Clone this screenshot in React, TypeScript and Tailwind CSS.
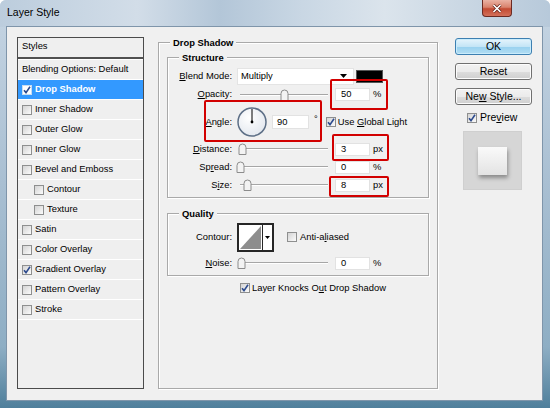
import React from "react";

const listItems = [
  { name: "Inner Shadow" },
  { name: "Outer Glow" },
  { name: "Inner Glow" },
  { name: "Bevel and Emboss" },
  { name: "Contour", sub: true },
  { name: "Texture", sub: true },
  { name: "Satin" },
  { name: "Color Overlay" },
  { name: "Gradient Overlay", checked: true },
  { name: "Pattern Overlay" },
  { name: "Stroke" },
];

function U({ children }: { children: React.ReactNode }) {
  return <span className="underline underline-offset-[1px]">{children}</span>;
}

function Check({ checked, white }: { checked?: boolean; white?: boolean }) {
  return (
    <span
      className={
        "flex h-[10px] w-[10px] shrink-0 items-center justify-center border " +
        (white
          ? "border-[#c8dcf0] bg-white"
          : "border-[#8e8f8f] bg-gradient-to-br from-[#d4d4d4] to-[#fbfbfb]")
      }
    >
      {checked && (
        <svg width="8" height="8" viewBox="0 0 8 8">
          <path d="M1 4.2 L3 6.6 L7 0.8" fill="none" stroke="#2d4b8e" strokeWidth="1.6" />
        </svg>
      )}
    </span>
  );
}

function Legend({ children }: { children: React.ReactNode }) {
  return (
    <div className="-mt-[6px] ml-[11px] w-fit bg-[#f0f0f0] px-[3px] font-bold leading-[11px]">
      {children}
    </div>
  );
}

function Slider({ pos }: { pos: number }) {
  return (
    <div className="relative ml-[4px] h-[14px] w-[92px]">
      <div className="absolute left-[4px] right-0 top-[6px] h-[2px] border-t border-b border-t-[#a6a6a6] border-b-white" />
      <svg className="absolute top-[1px]" style={{ left: pos }} width="9" height="12" viewBox="0 0 9 12">
        <path d="M1 11.5 V4.5 A3.5 3.5 0 0 1 8 4.5 V11.5 Z" fill="#f3f3f3" stroke="#8c8c8c" />
      </svg>
    </div>
  );
}

function Field({ value }: { value: string }) {
  return (
    <div className="ml-[7px] flex h-[13px] w-[35px] items-center border border-[#e2e2e2] bg-white pl-[5px]">
      {value}
    </div>
  );
}

function Label({ children }: { children: React.ReactNode }) {
  return <div className="w-[64px] shrink-0 text-right">{children}</div>;
}

function SliderRow({ label, pos, value, unit }: { label: React.ReactNode; pos: number; value: string; unit: string }) {
  return (
    <div className="flex h-[18px] items-center">
      <Label>{label}</Label>
      <Slider pos={pos} />
      <Field value={value} />
      <span className="ml-[3px]">{unit}</span>
    </div>
  );
}

function Btn({ children, primary }: { children: React.ReactNode; primary?: boolean }) {
  return (
    <div
      className={
        "flex h-[17px] w-[77px] items-center justify-center rounded-[3px] border " +
        (primary
          ? "border-[#3c7fb1] bg-[linear-gradient(180deg,#e5f4fc_0%,#c4e5f6_50%,#98d1ef_51%,#b2ddf3_100%)] shadow-[inset_0_0_0_1px_#c9ecfc]"
          : "border-[#707070] bg-[linear-gradient(180deg,#f2f2f2_0%,#ebebeb_50%,#dddddd_51%,#cfcfcf_100%)] shadow-[inset_0_0_0_1px_#fcfcfc]")
      }
    >
      <span>{children}</span>
    </div>
  );
}

export default function App() {
  return (
    <div className="relative flex h-[408px] w-[550px] flex-col overflow-hidden rounded-t-[6px] bg-[linear-gradient(180deg,#c6d5e3_0%,#a9bfd2_45%,#8eaec4_85%,#4f7f9b_100%)] font-['Liberation_Sans',Arial,sans-serif] text-[9.4px] text-black">
      {/* title bar */}
      <div className="flex h-[27px] shrink-0 items-start bg-[linear-gradient(90deg,#bccddd_0%,#d2dde8_25%,#b3c6d8_40%,#c9d7e4_55%,#dbe4ec_70%,#b7c9da_100%)]">
        <span className="ml-[7px] mt-[6px] text-[10.5px] leading-[13px]">Layer Style</span>
        <div className="ml-auto mr-[38px] flex h-[17px] w-[30px] items-center justify-center rounded-b-[4px] border border-t-0 border-[#6b2a22] bg-[linear-gradient(180deg,#eab2a3_0%,#d9836d_45%,#c24a32_55%,#d3705a_100%)]">
          <svg width="10" height="9" viewBox="0 0 10 9">
            <path d="M1.5 1 L8.5 8 M8.5 1 L1.5 8" stroke="#5a1d15" strokeWidth="3" />
            <path d="M1.5 1 L8.5 8 M8.5 1 L1.5 8" stroke="#ffffff" strokeWidth="1.7" />
          </svg>
        </div>
      </div>

      {/* client area */}
      <div className="mb-[8px] ml-[7px] mr-[8px] flex flex-1 items-start bg-[#f0f0f0] shadow-[0_0_0_1px_#7f95aa]">
        {/* styles list */}
        <div className="ml-[10px] mt-[10px] h-[352px] w-[127px] shrink-0 border border-[#4b4b4b] bg-[#efefef]">
          <div className="flex h-[21px] items-center border-b-2 border-[#505050] pb-[2px] pl-[4px]">Styles</div>
          <div className="h-[1px] bg-white" />
          <div className="flex h-[20px] items-center border-b border-white pl-[4px]">Blending Options: Default</div>
          <div className="flex h-[20px] items-center border-b border-white bg-[#3399ff] pl-[4px] font-bold text-white">
            <Check checked white />
            <span className="ml-[3px]">Drop Shadow</span>
          </div>
          {listItems.map((it) => (
            <div
              key={it.name}
              className={"flex h-[20px] items-center border-b border-white " + (it.sub ? "pl-[16px]" : "pl-[4px]")}
            >
              <Check checked={it.checked} />
              <span className="ml-[3px]">{it.name}</span>
            </div>
          ))}
        </div>

        {/* drop shadow settings */}
        <div className="ml-[14px] mt-[15px] h-[347px] w-[280px] shrink-0 border border-[#a9a9a9] shadow-[inset_1px_1px_0_#fff,1px_1px_0_#fff]">
          <Legend>Drop Shadow</Legend>
          <div className="mx-[8px] mt-[9px] border border-[#a9a9a9] pb-[3px] shadow-[inset_1px_1px_0_#fff,1px_1px_0_#fff]">
            <Legend>Structure</Legend>
            <div className="mt-[4px] flex h-[18px] items-center">
              <Label>
                <U>B</U>lend Mode:
              </Label>
              <div className="ml-[5px] flex h-[17px] w-[117px] items-center justify-between border border-[#e4e4e4] bg-white pl-[3px] pr-[6px]">
                <span>Multiply</span>
                <svg width="7" height="4" viewBox="0 0 7 4">
                  <path d="M0 0 H7 L3.5 4 Z" fill="#000" />
                </svg>
              </div>
              <div className="ml-[2px] h-[13px] w-[27px] border border-[#555] bg-black" />
            </div>
            <div className="flex h-[19px] items-center">
              <Label>
                <U>O</U>pacity:
              </Label>
              <Slider pos={44} />
              <Field value="50" />
              <span className="ml-[3px]">%</span>
            </div>
            <div className="flex h-[36px] items-center">
              <Label>
                <U>A</U>ngle:
              </Label>
              <svg className="ml-[5px]" width="30" height="30" viewBox="0 0 30 30">
                <defs>
                  <radialGradient id="dial" cx="40%" cy="35%" r="70%">
                    <stop offset="0" stopColor="#ffffff" />
                    <stop offset="1" stopColor="#e2e7ee" />
                  </radialGradient>
                </defs>
                <circle cx="15" cy="15" r="14" fill="url(#dial)" stroke="#5d6f86" strokeWidth="1.5" />
                <line x1="15" y1="15" x2="15" y2="2" stroke="#000" strokeWidth="1" />
                <circle cx="15" cy="15" r="1.4" fill="#000" />
              </svg>
              <div className="ml-[5px] flex h-[14px] w-[37px] items-center border border-[#e2e2e2] bg-white pl-[4px]">90</div>
              <span className="-mt-[6px] ml-[5px]">°</span>
              <span className="ml-[8px]">
                <Check checked />
              </span>
              <span className="ml-[2px]">
                Use <U>G</U>lobal Light
              </span>
            </div>
            <SliderRow label={<><U>D</U>istance:</>} pos={2} value="3" unit="px" />
            <SliderRow label={<>Sp<U>r</U>ead:</>} pos={0} value="0" unit="%" />
            <SliderRow label={<>S<U>i</U>ze:</>} pos={7} value="8" unit="px" />
          </div>

          <div className="mx-[8px] mt-[15px] border border-[#a9a9a9] pb-[3px] shadow-[inset_1px_1px_0_#fff,1px_1px_0_#fff]">
            <Legend>Quality</Legend>
            <div className="mt-[1px] flex h-[34px] items-center">
              <Label>Contour:</Label>
              <div className="ml-[5px] flex h-[29px] w-[37px] border-2 border-[#262626] bg-white">
                <svg width="23" height="25" viewBox="0 0 23 25">
                  <polygon points="1,24 22,1 22,24" fill="#8d8d8d" />
                </svg>
                <div className="flex flex-1 items-center justify-center border-l border-[#262626]">
                  <svg width="5" height="3" viewBox="0 0 5 3">
                    <path d="M0 0 H5 L2.5 3 Z" fill="#000" />
                  </svg>
                </div>
              </div>
              <span className="ml-[13px]">
                <Check />
              </span>
              <span className="ml-[3px]">
                Anti-a<U>l</U>iased
              </span>
            </div>
            <SliderRow label={<><U>N</U>oise:</>} pos={0.5} value="0" unit="%" />
          </div>

          <div className="ml-[81px] mt-[5px] flex h-[14px] items-center">
            <Check checked />
            <span className="ml-[2px]">
              Layer Knocks O<U>u</U>t Drop Shadow
            </span>
          </div>
        </div>

        {/* buttons */}
        <div className="ml-[17px] mt-[11px] flex w-[77px] shrink-0 flex-col text-[10.5px]">
          <Btn primary>OK</Btn>
          <div className="mt-[8px]">
            <Btn>Reset</Btn>
          </div>
          <div className="mt-[8px]">
            <Btn>
              Ne<U>w</U> Style...
            </Btn>
          </div>
          <div className="ml-[12px] mt-[8px] flex h-[10px] items-center">
            <Check checked />
            <span className="ml-[3px]">
              Pre<U>v</U>iew
            </span>
          </div>
          <div className="ml-[8px] mt-[8px] flex h-[59px] w-[59px] items-center justify-center border border-[#cfcfcf] bg-[#d6d6d6]">
            <div className="h-[28px] w-[29px] bg-gradient-to-b from-[#fafafa] to-[#e3e3e3] shadow-[1px_3px_4px_rgba(0,0,0,0.35)]" />
          </div>
        </div>
      </div>

      {/* red annotation boxes */}
      <div className="absolute left-[330px] top-[79px] h-[31px] w-[58px] rounded-[2px] border-2 border-[#d20000]" />
      <div className="absolute left-[204px] top-[100px] h-[42px] w-[118px] rounded-[2px] border-2 border-[#d20000]" />
      <div className="absolute left-[332px] top-[134px] h-[27px] w-[57px] rounded-[2px] border-2 border-[#d20000]" />
      <div className="absolute left-[329px] top-[176px] h-[21px] w-[60px] rounded-[2px] border-2 border-[#d20000]" />
    </div>
  );
}
